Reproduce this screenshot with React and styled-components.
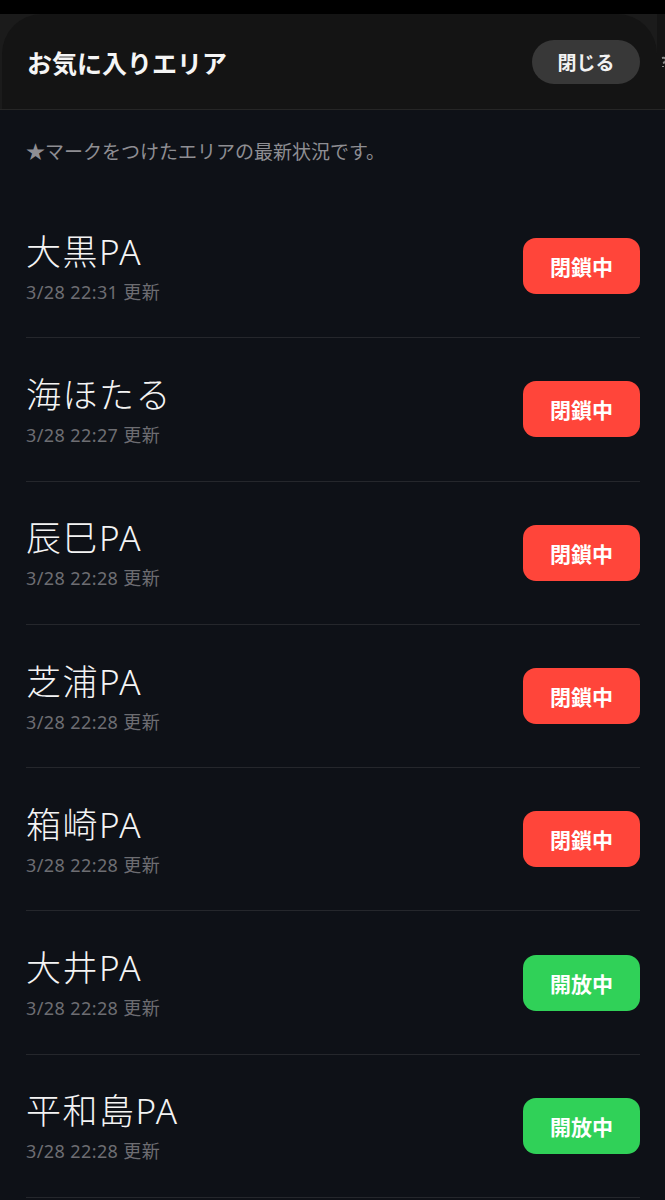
import React from "react";
import styled, { createGlobalStyle } from "styled-components";

const Global = createGlobalStyle`
  html, body { margin: 0; padding: 0; background: #0e1117; }
  body { font-family: "Noto Sans", "Noto Sans CJK JP", sans-serif; -webkit-font-smoothing: antialiased; }
  * { box-sizing: border-box; }
`;

const Screen = styled.div`
  width: 665px;
  min-height: 1200px;
  background: #0e1117;
  overflow: hidden;
`;

const StatusStrip = styled.div`
  height: 14px;
  background: #000;
`;

const HeaderBand = styled.div`
  display: flex;
  background: #1b1b1b;
  border-bottom: 1px solid #262626;
  height: 96px;
  overflow: hidden;
`;

const Sheet = styled.header`
  flex: 0 0 655px;
  margin-left: 2px;
  background: #141414;
  border-radius: 40px 40px 0 0;
  display: flex;
  align-items: center;
  justify-content: space-between;
  padding: 0 17px 0 25px;
`;

const Title = styled.h1`
  margin: 0;
  font-family: "Noto Sans CJK JP", sans-serif;
  font-size: 25px;
  font-weight: 700;
  color: #f5f5f5;
`;

const CloseButton = styled.button`
  width: 108px;
  height: 44px;
  border: none;
  border-radius: 22px;
  background: #383838;
  color: #f2f2f2;
  font-family: "Noto Sans CJK JP", sans-serif;
  font-size: 19px;
  font-weight: 700;
  display: flex;
  align-items: center;
  justify-content: center;
  padding: 0 0 1px;
`;

const PeekEdge = styled.div`
  flex: 0 0 8px;
  background: #141414;
  display: flex;
  align-items: center;
  padding-left: 4px;
`;

const Body = styled.main`
  padding: 0 25px 0 26px;
`;

const Intro = styled.p`
  margin: 0;
  padding-top: 29px;
  height: 85px;
  line-height: 24px;
  font-family: "Noto Sans CJK JP", sans-serif;
  font-size: 19px;
  color: #8e8e93;
`;

const Row = styled.div`
  height: 143.3px;
  display: flex;
  align-items: center;
  justify-content: space-between;
  border-bottom: 1px solid #25272c;
`;

const Info = styled.div`
  display: flex;
  flex-direction: column;
`;

const Name = styled.div`
  font-size: 35px;
  line-height: 46px;
  font-weight: 300;
  letter-spacing: 1.5px;
  color: #f4f4f4;
`;

const Updated = styled.div`
  margin-top: 5px;
  font-size: 18px;
  line-height: 24px;
  letter-spacing: 0.4px;
  color: #6d6d72;
`;

const Badge = styled.div`
  width: 117px;
  height: 56px;
  border-radius: 13px;
  background: ${(p) => (p.$open ? "#30d158" : "#ff453a")};
  color: #fff;
  font-family: "Noto Sans CJK JP", sans-serif;
  font-size: 21px;
  font-weight: 700;
  display: flex;
  align-items: center;
  justify-content: center;
`;

const areas = [
  { name: "大黒PA", time: "3/28 22:31", open: false },
  { name: "海ほたる", time: "3/28 22:27", open: false },
  { name: "辰巳PA", time: "3/28 22:28", open: false },
  { name: "芝浦PA", time: "3/28 22:28", open: false },
  { name: "箱崎PA", time: "3/28 22:28", open: false },
  { name: "大井PA", time: "3/28 22:28", open: true },
  { name: "平和島PA", time: "3/28 22:28", open: true },
];

export default function App() {
  return (
    <Screen>
      <Global />
      <StatusStrip />
      <HeaderBand>
        <Sheet>
          <Title>お気に入りエリア</Title>
          <CloseButton>閉じる</CloseButton>
        </Sheet>
        <PeekEdge>
          <svg width="6" height="14" viewBox="0 0 6 14">
            <path d="M1 3 Q5 2 5 5 Q5 7 2 8 M2 11 L2 12" stroke="#8a8a8a" strokeWidth="2" fill="none" />
          </svg>
        </PeekEdge>
      </HeaderBand>
      <Body>
        <Intro>★マークをつけたエリアの最新状況です。</Intro>
        {areas.map((a) => (
          <Row key={a.name}>
            <Info>
              <Name>{a.name}</Name>
              <Updated>{a.time} 更新</Updated>
            </Info>
            <Badge $open={a.open}>{a.open ? "開放中" : "閉鎖中"}</Badge>
          </Row>
        ))}
      </Body>
    </Screen>
  );
}
